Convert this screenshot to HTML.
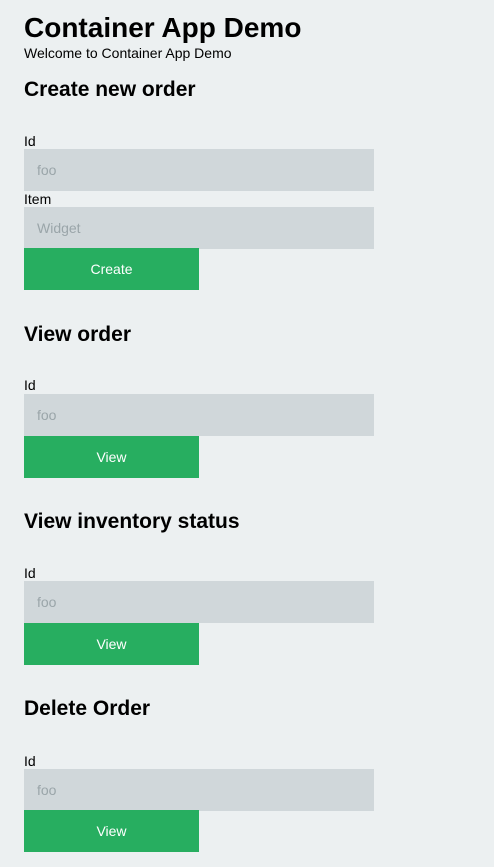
<!DOCTYPE html>
<html><head><style>
body{margin:0;background:#ecf0f1;font-family:"Liberation Sans",Arial,sans-serif;color:#000;width:494px;height:867px;position:relative;overflow:hidden}
.a{position:absolute;left:24px;white-space:nowrap}
h1{margin:0;font-size:28px;font-weight:bold;line-height:32px}
.sub{font-size:14px;line-height:16px}
h3{margin:0;font-size:21px;font-weight:bold;line-height:24px}
.l{font-size:14px;line-height:16px}
.i{width:350px;height:42px;background:#d0d7da;color:#9aa5a9;font-size:14px;line-height:42px;box-sizing:border-box;padding-left:13px}
.b{width:175px;height:42px;background:#27ae60;color:#fff;font-size:14px;line-height:42px;text-align:center}
</style></head><body>
<h1 class="a" style="top:12px">Container App Demo</h1>
<div class="a sub" style="top:45px">Welcome to Container App Demo</div>
<h3 class="a" style="top:78px">Create new order</h3>
<div class="a l" style="top:133px">Id</div>
<div class="a i" style="top:149px">foo</div>
<div class="a l" style="top:191px">Item</div>
<div class="a i" style="top:207px">Widget</div>
<div class="a b" style="top:248px">Create</div>
<h3 class="a" style="top:323px">View order</h3>
<div class="a l" style="top:377px">Id</div>
<div class="a i" style="top:394px">foo</div>
<div class="a b" style="top:436px">View</div>
<h3 class="a" style="top:510px">View inventory status</h3>
<div class="a l" style="top:565px">Id</div>
<div class="a i" style="top:581px">foo</div>
<div class="a b" style="top:623px">View</div>
<h3 class="a" style="top:697px">Delete Order</h3>
<div class="a l" style="top:753px">Id</div>
<div class="a i" style="top:769px">foo</div>
<div class="a b" style="top:810px">View</div>
</body></html>
